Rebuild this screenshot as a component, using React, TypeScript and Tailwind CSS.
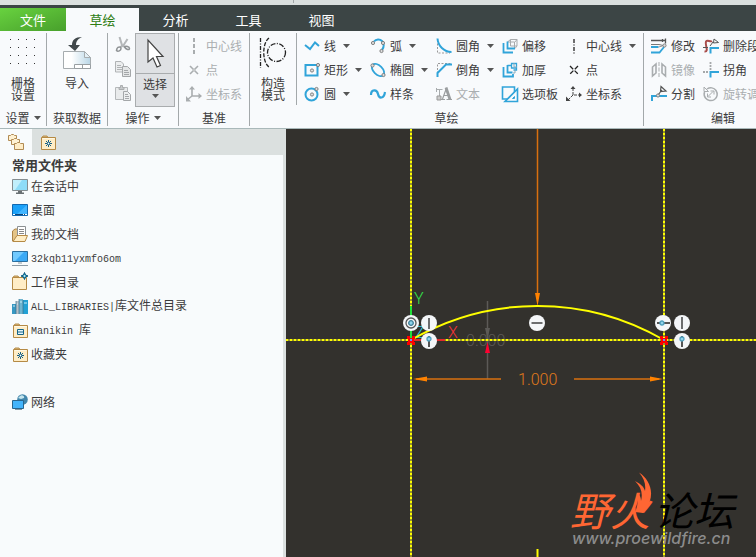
import type { ReactNode } from 'react'
import { clsx } from 'clsx'

const BLUE = '#30a4d9'
const DARK = '#444444'
const GREY = '#a9adaf'

function Icon({ children }: { children: ReactNode }) {
  return (
    <svg className="h-4 w-4 shrink-0 overflow-visible" viewBox="0 0 16 16" fill="none" aria-hidden="true">
      {children}
    </svg>
  )
}

function Caret() {
  return (
    <svg className="h-1 w-[7px] shrink-0" viewBox="0 0 7 4" aria-hidden="true">
      <path d="M0 0h7L3.5 4z" fill="#555" />
    </svg>
  )
}

function Knob({ x, y }: { x: number; y: number }) {
  return <circle cx={x} cy={y} r="1.6" fill="#ddd" stroke="#777" strokeWidth="0.9" />
}

/* ---------- ribbon icons ---------- */

const icons = {
  cut: (
    <Icon>
      <path d="M4.500 0 7 8l3 2M12.500 2 8 9l-3 1" stroke="#b4b7b9" strokeWidth="2" />
      <path d="M2 11.500c1-2 4-2 4 0s-3 3.500-4.500 2z" stroke="#8f9395" strokeWidth="1.500" />
      <path d="M9.500 10c1-1.500 5-.5 5 1.500s-3.500 1-5-1.500z" stroke="#8f9395" strokeWidth="1.500" />
    </Icon>
  ),
  copy: (
    <Icon>
      <path d="M.5.5H6L8.500 3v8h-8z" fill="#eceeef" stroke="#b0b3b5" />
      <path d="M2 4.500h4M2 6.500h5M2 8.500h5" stroke="#b0b3b5" />
      <path d="M7.500 5.500h5l3 3v7h-8z" fill="#e4e6e7" stroke="#a4a7a9" />
      <path d="M9 9.500h4M9 11.500h5M9 13.500h5" stroke="#a4a7a9" />
    </Icon>
  ),
  paste: (
    <Icon>
      <path d="M.5 2.500h12v12H.5z" fill="#e9ebec" stroke="#b5b8ba" />
      <path d="M4 2.500h1.500V.5h2v2H9v2H4z" fill="#c6c9cb" stroke="#aaadaf" />
      <path d="M8.500 6.500h4l3 3v6h-7z" fill="#eceeef" stroke="#a4a7a9" />
      <path d="M10 9.500h3M10 11.500h4M10 13.500h4" stroke="#a4a7a9" />
    </Icon>
  ),
  axisOff: (
    <Icon>
      <path d="M8 0v16" stroke={GREY} strokeWidth="2" strokeDasharray="4 2" />
    </Icon>
  ),
  pointOff: (
    <Icon>
      <path d="m4 4 8 8M12 4l-8 8" stroke={GREY} strokeWidth="1.600" />
      <circle cx="8" cy="8" r="1.700" fill="#c4c7c8" />
    </Icon>
  ),
  csysOff: (
    <Icon>
      <path d="M6 1v9h8M6 10l-5 4" stroke={GREY} strokeWidth="1.600" />
      <path d="M3 3.500 6 0l3 3.500zM12.500 7 16 10l-3.500 3zM0 10v5.500h5z" fill={GREY} />
    </Icon>
  ),
  line: (
    <Icon>
      <path d="m1 7 5 4 5-6.500 4 3.500" stroke={BLUE} strokeWidth="2" />
    </Icon>
  ),
  rect: (
    <Icon>
      <path d="M1.500 3h12v10.500h-12z" stroke={BLUE} strokeWidth="2" />
      <Knob x={8} y={8.5} />
      <Knob x={14} y={3} />
    </Icon>
  ),
  circle: (
    <Icon>
      <circle cx="7.500" cy="8.500" r="6" stroke={BLUE} strokeWidth="2" />
      <Knob x={8} y={8.5} />
      <Knob x={12.5} y={3} />
    </Icon>
  ),
  arc: (
    <Icon>
      <path d="M4 3.500C6 1 10 1 12 3s2.500 6 0 9" stroke={BLUE} strokeWidth="2" />
      <Knob x={3} y={5} />
      <Knob x={13} y={5} />
      <Knob x={11.5} y={13} />
    </Icon>
  ),
  ellipse: (
    <Icon>
      <ellipse cx="8" cy="8" rx="7.500" ry="4.500" transform="rotate(45 8 8)" stroke={BLUE} strokeWidth="1.800" />
      <Knob x={2.5} y={3.5} />
      <Knob x={13.5} y={13} />
    </Icon>
  ),
  spline: (
    <Icon>
      <path d="M1 9c0-6 6-6 7-1s6 5 7-2" stroke={BLUE} strokeWidth="2.200" />
    </Icon>
  ),
  fillet: (
    <Icon>
      <path d="M1.500 2v13H14" stroke="#999" strokeDasharray="2 1.500" />
      <path d="M1.500.5C2 8 8 14 15.500 14" stroke={BLUE} strokeWidth="2" />
    </Icon>
  ),
  chamfer: (
    <Icon>
      <path d="M1.500 15V1.500H15" stroke="#999" strokeDasharray="2 1.500" />
      <path d="M1.500 15v-4L10 2.500h6" stroke={BLUE} strokeWidth="2" />
    </Icon>
  ),
  text: (
    <Icon>
      <path d="M.5 2v4M.5 3.500h6M3.500 3v7" stroke={GREY} />
      <path d="M1 10h4v4H1z" stroke="#999" fill="#ccc" />
      <path d="M5 13.500h4M10.500 13.500H16M6.500 13 10.500 2M7.500 9.500H13" stroke="#9b9ea0" strokeWidth="1.200" />
      <path d="m10 1.500 4 12" stroke="#9b9ea0" strokeWidth="2.800" />
    </Icon>
  ),
  offset: (
    <Icon>
      <path d="M8.500 8V1.500h6.500V8zM5.500 4l3-2.500M13 10.500 15 8M12.500 4.500 15 1.500M5.500 4h7v6" stroke="#a8abad" />
      <path d="M1.500 5v9.500h9.500M5.500 3.500v7H13" stroke={BLUE} strokeWidth="1.800" />
    </Icon>
  ),
  thicken: (
    <Icon>
      <path d="M1.500 5v9.500h9.500V12M5.500 3v7.500h5" stroke={BLUE} strokeWidth="1.800" />
      <path d="M5.500 3.500h4v-2h5V8h-3M9.500 1.500V6H14" stroke={BLUE} strokeWidth="1.300" />
      <path d="M12 1v4h3M13 8v3h-2" stroke="#8ab" />
    </Icon>
  ),
  palette: (
    <Icon>
      <path d="M.5 1h12v12H.500z" stroke={BLUE} strokeWidth="1.600" />
      <path d="M15.500 3v12.500H3z" fill="#f8fafc" stroke={BLUE} strokeWidth="1.600" />
      <path d="M12.500 10.500v2h-2z" stroke={BLUE} />
    </Icon>
  ),
  axis: (
    <Icon>
      <path d="M8 1v15" stroke="#222" strokeWidth="1.300" strokeDasharray="4 1.500 1 1.500" />
    </Icon>
  ),
  point: (
    <Icon>
      <path d="m4 4 8 8M12 4l-8 8" stroke="#222" strokeWidth="1.300" strokeDasharray="4.500 2" />
    </Icon>
  ),
  csys: (
    <Icon>
      <path d="M7 2v7h7M7 9l-5 5" stroke={DARK} strokeDasharray="3 1" />
      <path d="M4.500 3 7 0l2.500 3zM13 6.500 16 9l-3 2.500zM0 10.500V15h4.500z" fill={DARK} />
    </Icon>
  ),
  modify: (
    <Icon>
      <path d="M0 2.500h15M14.500.5v5M11.500 1v3" stroke="#555" strokeWidth="1.300" />
      <path d="M0 6.500h8l4 1" stroke="#777" />
      <path d="M0 9h7.500M0 14.500h8.500l4.500-5.500" stroke={BLUE} strokeWidth="1.800" />
      <path d="m7.500 9 4-1" stroke="#999" />
      <Knob x={13.5} y={7.5} />
    </Icon>
  ),
  mirror: (
    <Icon>
      <path d="M1.500 5 5 2v9l-3.500 3zM14.500 5 11 2v9l3.500 3z" stroke={GREY} strokeWidth="1.600" />
      <path d="M8 0v16" stroke={GREY} strokeDasharray="4 1.500" />
    </Icon>
  ),
  divide: (
    <Icon>
      <path d="M1 15v-5h15" stroke={BLUE} strokeWidth="2" />
      <path d="m7 9 4-5m-1-3.500L15 5l-5.500.5z" stroke="#555" strokeWidth="1.200" />
      <Knob x={7} y={9.5} />
    </Icon>
  ),
  deleteSeg: (
    <Icon>
      <path d="M1.500 13.500c5 .5 0-7 1.500-10 1.500-2.500 4 1 6-.5" stroke="#a84d4b" strokeWidth="2" />
      <path d="M0 9.500h5M11 1l4.500 3.500-5 .5zM10 4 7 8" stroke="#555" />
      <path d="M16 10H7.500v5.500" stroke={BLUE} strokeWidth="2" />
    </Icon>
  ),
  corner: (
    <Icon>
      <path d="M7.500 0v8M0 10h6" stroke="#a5a8aa" strokeWidth="1.800" strokeDasharray="2 1" />
      <path d="M16 10H7.500v5.500" stroke={BLUE} strokeWidth="2" />
    </Icon>
  ),
  rotate: (
    <Icon>
      <path d="M4 3c3-2 7-1.500 9 1.500s1.500 7-1.500 9-7 1-9-1.500-1.500-4.500-1-6" stroke={GREY} strokeWidth="1.500" />
      <path d="M1 1v4.500h4.500zM5 10.500l5-5M7.500 5H11v3.500M8 11H4.500V7.500" stroke={GREY} />
    </Icon>
  ),
}

/* ---------- ribbon pieces ---------- */

interface ToolProps {
  icon: ReactNode
  label: string
  menu?: boolean
  disabled?: boolean
}

function Tool({ icon, label, menu, disabled }: ToolProps) {
  return (
    <button
      type="button"
      disabled={disabled}
      className={clsx('flex h-6 items-center gap-1 whitespace-nowrap', disabled && 'text-[#aaaeb0]')}
    >
      {icon}
      <span>{label}</span>
      {menu && <span className="pl-[3px]"><Caret /></span>}
    </button>
  )
}

function ToolColumn({ tools }: { tools: ToolProps[] }) {
  return (
    <div className="flex shrink-0 flex-col pt-[3px]">
      {tools.map(tool => (
        <Tool key={tool.label} {...tool} />
      ))}
    </div>
  )
}

interface GroupProps {
  label: string
  menu?: boolean
  className?: string
  children: ReactNode
}

function Group({ label, menu, className, children }: GroupProps) {
  return (
    <section className={clsx('flex shrink-0 flex-col', className)} aria-label={label}>
      <div className="flex h-[76px] justify-center">{children}</div>
      <div className="flex h-[21px] items-center justify-center gap-1 whitespace-nowrap">
        {label}
        {menu && <Caret />}
      </div>
    </section>
  )
}

function Divider() {
  return <div className="my-0.5 w-px shrink-0 bg-[#a3a8aa]" />
}

function BigTool({ icon, lines }: { icon: ReactNode; lines: string[] }) {
  return (
    <button type="button" className="flex flex-col items-center pt-1">
      <span className="flex h-[42px] items-start justify-center">{icon}</span>
      {lines.map(line => (
        <span key={line} className="leading-3">{line}</span>
      ))}
    </button>
  )
}

const gridDots = [0, 8, 16, 24]

const gridIcon = (
  <svg className="h-9 w-7" viewBox="0 0 28 36" aria-hidden="true">
    {gridDots.map(y => gridDots.map(x => (
      <rect key={`${x}-${y}`} x={x + 1} y={y + 4} width="1" height="1" fill="#333" />
    )))}
  </svg>
)

const importIcon = (
  <svg className="h-9 w-7" viewBox="0 0 28 36" aria-hidden="true">
    <defs>
      <linearGradient id="sheet" x1="0" y1="0" x2="1" y2="0">
        <stop offset="0.300" stopColor="#fff" />
        <stop offset="1" stopColor="#b9d6e6" />
      </linearGradient>
    </defs>
    <path d="M.5 16.500h21l6 6v11H.5z" fill="url(#sheet)" stroke="#a6acaf" />
    <path d="M21.500 16.500v6h6z" fill="#e4f0f6" stroke="#a6acaf" />
    <path d="M11.500 33.500v-4h16v4zM19.500 29.500v4" fill="#fff" stroke="#999fa2" />
    <path d="M19 2c-7 0-10 3-10 8H5l7 6 5-6h-4c0-4 2-6 6-8z" fill="#41484b" />
  </svg>
)

const constructionIcon = (
  <svg className="h-9 w-7" viewBox="0 0 28 36" fill="none" stroke="#222" strokeWidth="1.300" aria-hidden="true">
    <path d="M1.500 3v30" strokeDasharray="4 1.500 1 1.500" />
    <path d="M10 3C3 8 3 27 10 32" strokeDasharray="4 1.500" />
    <circle cx="17.500" cy="17.500" r="9" strokeDasharray="5 1.500 1 1.500" />
  </svg>
)

const sketchColumns: ToolProps[][] = [
  [
    { icon: icons.line, label: '线', menu: true },
    { icon: icons.rect, label: '矩形', menu: true },
    { icon: icons.circle, label: '圆', menu: true },
  ],
  [
    { icon: icons.arc, label: '弧', menu: true },
    { icon: icons.ellipse, label: '椭圆', menu: true },
    { icon: icons.spline, label: '样条' },
  ],
  [
    { icon: icons.fillet, label: '圆角', menu: true },
    { icon: icons.chamfer, label: '倒角', menu: true },
    { icon: icons.text, label: '文本', disabled: true },
  ],
  [
    { icon: icons.offset, label: '偏移' },
    { icon: icons.thicken, label: '加厚' },
    { icon: icons.palette, label: '选项板' },
  ],
  [
    { icon: icons.axis, label: '中心线', menu: true },
    { icon: icons.point, label: '点' },
    { icon: icons.csys, label: '坐标系' },
  ],
]

function Ribbon() {
  return (
    <div className="flex overflow-hidden border-b border-[#a9b8b9] bg-[#f8fafc]">
      <Group label="设置" menu className="w-[46px]">
        <BigTool icon={gridIcon} lines={['栅格', '设置']} />
      </Group>
      <Divider />
      <Group label="获取数据" className="w-[60px]">
        <BigTool icon={importIcon} lines={['导入']} />
      </Group>
      <Divider />
      <Group label="操作" menu className="w-[70px]">
        <div className="flex gap-1 pt-0.5 pl-1">
          <div className="flex flex-col">
            <button type="button" disabled aria-label="剪切" className="flex h-6 items-center">{icons.cut}</button>
            <button type="button" disabled aria-label="复制" className="flex h-6 items-center">{icons.copy}</button>
            <button type="button" disabled aria-label="粘贴" className="flex h-6 items-center">{icons.paste}</button>
          </div>
          <button type="button" className="flex w-10 flex-col items-center border border-[#a9acae] bg-[#dfe1e4]">
            <span className="flex h-10 w-full items-center justify-center border-b border-[#a9acae]">
              <svg className="h-8 w-5" viewBox="0 0 20 32" aria-hidden="true">
                <path d="M3 2v22l5-4 4 9 3.500-1.500-4-9H18z" fill="#fff" stroke="#444" strokeWidth="1.200" />
              </svg>
            </span>
            <span className="leading-5">选择</span>
            <Caret />
          </button>
        </div>
      </Group>
      <Divider />
      <Group label="基准" className="w-[70px]">
        <ToolColumn
          tools={[
            { icon: icons.axisOff, label: '中心线', disabled: true },
            { icon: icons.pointOff, label: '点', disabled: true },
            { icon: icons.csysOff, label: '坐标系', disabled: true },
          ]}
        />
      </Group>
      <Divider />
      <Group label="草绘" className="w-[393px]">
        <div className="flex w-[46px] justify-center">
          <BigTool icon={constructionIcon} lines={['构造', '模式']} />
        </div>
        <Divider />
        <div className="grid flex-1 grid-cols-[66px_66px_66px_64px_1fr] pl-[7px]">
          {sketchColumns.map(tools => (
            <ToolColumn key={tools[0].label} tools={tools} />
          ))}
        </div>
      </Group>
      <Divider />
      <Group label="编辑" className="w-[158px]">
        <div className="grid flex-1 grid-cols-[52px_1fr] pl-[7px]">
          <ToolColumn
            tools={[
              { icon: icons.modify, label: '修改' },
              { icon: icons.mirror, label: '镜像', disabled: true },
              { icon: icons.divide, label: '分割' },
            ]}
          />
          <ToolColumn
            tools={[
              { icon: icons.deleteSeg, label: '删除段' },
              { icon: icons.corner, label: '拐角' },
              { icon: icons.rotate, label: '旋转调整大小', disabled: true },
            ]}
          />
        </div>
      </Group>
    </div>
  )
}

function TabBar() {
  return (
    <div role="tablist" className="flex bg-[#3c4545] pt-[3px] text-[13px] text-white">
      <button type="button" className="h-[23px] w-[66px] bg-linear-to-br from-[#68d23f] to-[#48a02c]">文件</button>
      <button type="button" role="tab" aria-selected className="h-[23px] w-[73px] bg-[#f8fafc] text-[#2f7d14]">草绘</button>
      {['分析', '工具', '视图'].map(tab => (
        <button key={tab} type="button" role="tab" className="h-[23px] w-[73px]">{tab}</button>
      ))}
    </div>
  )
}

/* ---------- folder panel ---------- */

function FolderShape() {
  return (
    <>
      <path d="M2 3.500 3 2h4l1 1.500z" fill="#d9b777" stroke="#b78f4e" />
      <path d="M1.500 3.500h14v12h-14z" fill="#ffedc6" stroke="#b58a45" />
      <path d="M2.500 4.500h12" stroke="#fff8e4" />
    </>
  )
}

const places = {
  session: (
    <Icon>
      <path d="M.5 1.500h15v11H.5z" fill="#8edcf8" stroke="#858d90" />
      <path d="M1 2h9l-7 10H1z" fill="#c1effc" />
      <path d="M6 13h4v1.500h2V16H4v-1.500h2z" fill="#697073" />
    </Icon>
  ),
  desktop: (
    <Icon>
      <path d="M.5 2.500h15v11H.5z" fill="#1ba1f8" stroke="#1268b0" />
      <path d="M15 3v9H5z" fill="#41b5ff" />
      <path d="M1 12.500h14" stroke="#0c4478" />
      <path d="M1 12.500h2M11 12.500h1M13 12.500h2" stroke="#fff" />
    </Icon>
  ),
  documents: (
    <Icon>
      <path d="M.5 15V5L3 3h3v10z" fill="#e4c487" stroke="#ac8346" />
      <path d="M5.500.5h8v11h-8z" fill="#fff" stroke="#8c9193" />
      <path d="M7 3.500h5M7 5.500h5M7 7.500h5" stroke="#888" />
      <path d="m1 15.500 4-6h10.500l-2.500 6z" fill="#ffedc4" stroke="#b58a45" />
    </Icon>
  ),
  computer: (
    <Icon>
      <path d="M.5 1.500h15v10H.5z" fill="#3ba9f5" stroke="#2b6e9e" />
      <path d="M1 2h11L3 11H1z" fill="#71caff" />
      <path d="M6 13h4M0 15.500h16" stroke="#8c9ba5" />
    </Icon>
  ),
  workdir: (
    <Icon>
      <path d="M1 3.500 2 2h4l1 1.500z" fill="#d9b777" stroke="#b78f4e" />
      <path d="M.5 3.500h14v12H.500z" fill="#ffedc6" stroke="#b58a45" />
      <path d="m12.500-1.500 1 2.500 2.500 1-2.500 1-1 2.500-1-2.500L9 2l2.500-1z" fill="#28a2c8" stroke="#0a567c" />
      <circle cx="12.500" cy="2" r="0.800" fill="#fff" />
    </Icon>
  ),
  library: (
    <Icon>
      <path d="M0 6h4v10H0z" fill="#3898c2" />
      <path d="M4 3h3v13H4z" fill="#b5c0c8" />
      <path d="M7 1h4v15H7z" fill="#6fb5d0" />
      <path d="M11 2h5v14h-5z" fill="#23a1d4" />
      <path d="M1 8h2M5 6h1M8 4h2M12 5h3" stroke="#c8eefa" />
      <path d="M4 3v13M7 1v15M11 2v14" stroke="#376f89" strokeWidth="0.700" />
    </Icon>
  ),
  manikin: (
    <Icon>
      <FolderShape />
      <path d="M5.500 7.500h6v5h-6zM5.500 10h6" fill="#e5f5fb" stroke="#146487" />
    </Icon>
  ),
  favorites: (
    <Icon>
      <FolderShape />
      <path d="M8.500 6v7M5 9.500h7M6 7l5 5M11 7l-5 5" stroke="#155f83" />
      <circle cx="8.500" cy="9.500" r="0.900" fill="#fff" />
    </Icon>
  ),
  network: (
    <Icon>
      <circle cx="10.500" cy="5.500" r="5.300" fill="#4286ab" />
      <path d="M8 2c2-2 5 0 4 2L9 5 6 4z" fill="#c5e5ed" />
      <path d="M.5 6.500h11v8H.5z" fill="#43b4fb" stroke="#28658d" />
      <path d="M3 15.500h7" stroke="#8097a4" />
    </Icon>
  ),
  tree: (
    <Icon>
      <path d="M.5 1.500h2l1-1h2l1 1h2v5h-8z" fill="#fff2d3" stroke="#b18b53" />
      <path d="M3.500 5.500h2l1-1h2l1 1h2v5h-8z" fill="#fff2d3" stroke="#b18b53" />
      <path d="M6.500 9.500h2l1-1h2l1 1h3v6h-9z" fill="#ffedc6" stroke="#b18b53" />
    </Icon>
  ),
}

// latin parts are set in a smaller monospace so that two of them fill one CJK cell
function Latin({ children }: { children: ReactNode }) {
  return <span className="font-['Liberation_Mono',monospace] text-[10px]">{children}</span>
}

const folders: { id: string; icon: ReactNode; latin?: string; label?: string }[] = [
  { id: 'session', icon: places.session, label: '在会话中' },
  { id: 'desktop', icon: places.desktop, label: '桌面' },
  { id: 'documents', icon: places.documents, label: '我的文档' },
  { id: 'computer', icon: places.computer, latin: '32kqb11yxmfo6om' },
  { id: 'workdir', icon: places.workdir, label: '工作目录' },
  { id: 'library', icon: places.library, latin: 'ALL_LIBRARIES|', label: '库文件总目录' },
  { id: 'manikin', icon: places.manikin, latin: 'Manikin ', label: '库' },
  { id: 'favorites', icon: places.favorites, label: '收藏夹' },
  { id: 'network', icon: places.network, label: '网络' },
]

function FolderPanel() {
  return (
    <aside className="flex w-[286px] shrink-0 flex-col border-r-3 border-[#dbe0df] bg-[#f8fbfc]">
      <div className="flex h-[26px] bg-[#dbe0df]">
        <button type="button" aria-label="文件夹树" className="flex w-8 items-center justify-center bg-[#f8fbfc]">
          {places.tree}
        </button>
        <button type="button" aria-label="收藏夹列表" className="flex w-8 items-center justify-center">
          {places.favorites}
        </button>
      </div>
      <h2 className="pl-3 text-[13px] leading-[19px] font-bold">常用文件夹</h2>
      <ul className="pl-3">
        {folders.map(folder => (
          <li key={folder.id} className={clsx(folder.id === 'network' && 'mt-6')}>
            <button type="button" className="flex h-6 items-center gap-[3px]">
              {folder.icon}
              <span className="whitespace-pre">
                {folder.latin && <Latin>{folder.latin}</Latin>}
                {folder.label}
              </span>
            </button>
          </li>
        ))}
      </ul>
    </aside>
  )
}

/* ---------- sketch canvas ---------- */

function Bubble({ x, y, children }: { x: number; y: number; children: ReactNode }) {
  return (
    <g transform={`translate(${x} ${y})`} stroke="#222" strokeWidth="1.300">
      <circle r="8" fill="#f4f6f8" stroke="none" />
      {children}
    </g>
  )
}

function Endpoint({ x, y }: { x: number; y: number }) {
  return (
    <g transform={`translate(${x} ${y})`}>
      <path d="M-4-5h3v2h2v-2h3v3h-1v3h1v3H1V2h-2v2h-3V1h1v-3h-1z" fill="#f00" />
      <path d="M-1-2h2v2h-2z" fill="#6a8cff" />
    </g>
  )
}

function DottedLine({ d }: { d: string }) {
  return (
    <>
      <path d={d} stroke="#94922a" strokeWidth="2" />
      <path d={d} stroke="#ffff00" strokeWidth="2" strokeDasharray="2 2" />
    </>
  )
}

function Sketch() {
  return (
    <svg
      className="absolute inset-0 h-full w-full font-['Roboto',sans-serif] text-[16px] font-light"
      fill="none"
      aria-label="草绘"
    >
      <text x="180" y="217" fill="#5c5a57">0.000</text>
      <path d="M201.500 172v78" stroke="#5c5a57" strokeWidth="1.500" />
      <path d="M199 199h5l-2.500 11z" fill="#5c5a57" />

      <DottedLine d="M0 211h3000" />
      <DottedLine d="M125 0v3000" />
      <DottedLine d="M378 0v3000" />
      <path d="M251.500 420v10" stroke="#ffff00" strokeWidth="2" />

      <path d="M199 224h5l-2.500-11z" fill="#ff0030" />
      <path d="M125 177v34" stroke="#22e03a" strokeWidth="2" />
      <path d="M125 211h34" stroke="#e02a2a" strokeWidth="2" />
      <text x="128" y="175" fill="#35e04c">Y</text>
      <text x="162" y="209" fill="#f03535">X</text>
      <text x="129" y="209" fill="#2fd5e5">Z</text>

      <g stroke="#d9700f" strokeWidth="1.500">
        <path d="M251.500 0v170M130 250h85M288 250h85" />
      </g>
      <path d="M249 164h5l-2.500 13zM127 250l14-2.500v5zM377 250l-13-2.500v5z" fill="#ff8200" />
      <text x="232" y="256" fill="#e07a1c">1.000</text>

      <path d="M125 211A252 252 0 0 1 378 211" stroke="#ffff00" strokeWidth="2" />
      <Endpoint x={125} y={212} />
      <Endpoint x={378} y={212} />

      <Bubble x={125} y={194}>
        <circle r="5" stroke="#555" />
        <circle r="2.300" fill="#8fd3ea" stroke="#3c7f99" />
      </Bubble>
      <Bubble x={143} y={194}>
        <path d="M0-5V6" />
      </Bubble>
      <Bubble x={143} y={212}>
        <path d="M0-5V6" stroke="#555" strokeWidth="2" />
        <circle cy="-2" r="2" fill="#8fd3ea" stroke="#4f9fbd" />
      </Bubble>
      <Bubble x={251} y={194}>
        <path d="M-5.500 0h11" />
      </Bubble>
      <Bubble x={377} y={194}>
        <path d="M-6 0H7" stroke="#555" strokeWidth="2" />
        <circle cx="-1" r="2" fill="#8fd3ea" stroke="#4f9fbd" />
      </Bubble>
      <Bubble x={396} y={194}>
        <path d="M0-6V6" />
      </Bubble>
      <Bubble x={396} y={212}>
        <path d="M0-5V6" stroke="#555" strokeWidth="2" />
        <circle cy="-2" r="2" fill="#8fd3ea" stroke="#4f9fbd" />
      </Bubble>
    </svg>
  )
}

function Watermark() {
  return (
    <svg className="absolute right-0 bottom-0 h-[97px] w-[200px]" viewBox="0 0 200 97" aria-label="野火论坛">
      <text
        x="14"
        y="66"
        className="font-['Noto_Sans_CJK_SC',sans-serif] text-[40px] italic"
        fill="#ff6633"
      >
        野火<tspan x="98" fill="#000">论坛</tspan>
      </text>
      <path
        d="M83 12.500C95 20 101 37 87 53l-8-1c3-6 3-12 3-19 2 2 3 5 3 8 2-8 0-14-6-20 6 3 9 6 10 10 1-7-1-13-6-18.500z"
        fill="#ff6633"
      />
      <text x="16" y="84" className="font-['Inter',sans-serif] text-[16px] font-medium italic" fill="#8c8c8c">
        www.proewildfire.cn
      </text>
    </svg>
  )
}

export default function App() {
  return (
    <div className="flex min-h-screen flex-col overflow-hidden bg-[#dbe0df] font-['Noto_Sans_CJK_SC',sans-serif] text-xs text-[#3c3c3c]">
      <div className="h-[5px] pl-[293px]">
        <div className="h-[3px] w-px bg-[#a3a8aa]" />
      </div>
      <TabBar />
      <Ribbon />
      <div className="flex flex-1">
        <FolderPanel />
        <main className="relative flex-1 overflow-hidden bg-[#33312d]">
          <Sketch />
          <Watermark />
        </main>
      </div>
    </div>
  )
}
